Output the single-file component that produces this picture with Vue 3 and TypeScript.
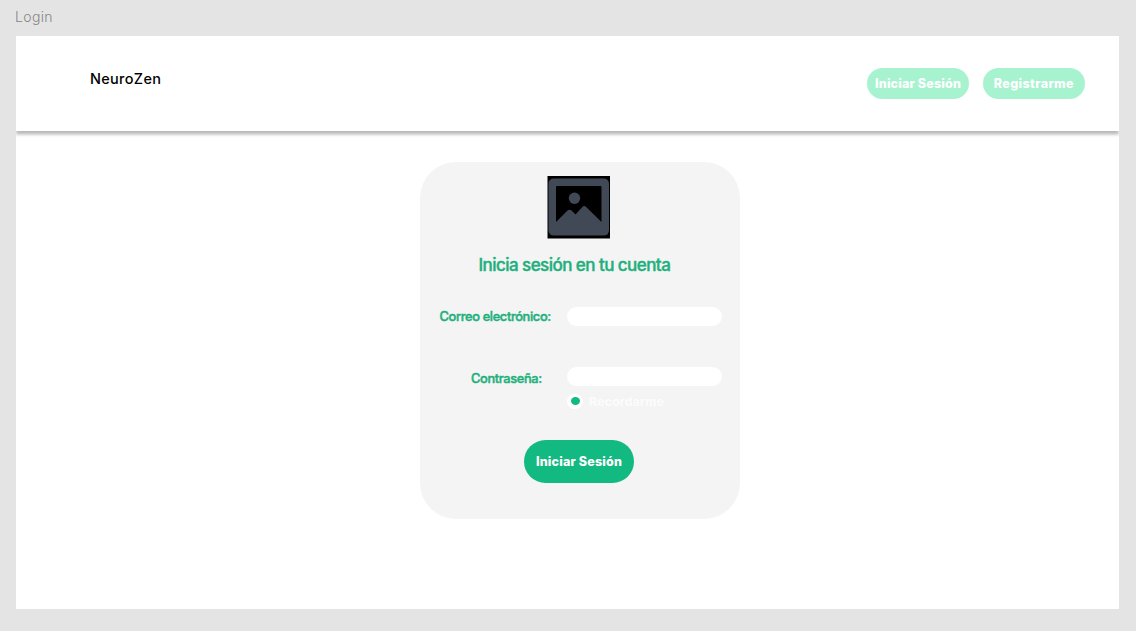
<script setup lang="ts">
import { ref } from 'vue'

const email = ref('')
const password = ref('')
const remember = ref(true)
</script>

<template>
  <div class="canvas">
    <div class="frame-name"><span>Login</span></div>
    <main class="frame">
      <header class="topbar">
        <span class="brand">NeuroZen</span>
        <nav class="actions">
          <button class="pill" type="button"><span class="t-login">Iniciar Sesión</span></button>
          <button class="pill" type="button"><span class="t-register">Registrarme</span></button>
        </nav>
      </header>
      <form class="card" @submit.prevent>
        <svg class="picture" viewBox="0 0 63 63" aria-hidden="true">
          <rect x="0.500" width="62.500" height="62.500" fill="#000" />
          <path
            fill="#414956"
            fill-rule="evenodd"
            d="M7 2.500H56.500Q62 2.500 62 8V54Q62 59.500 56.500 59.500H7Q1.500 59.500 1.500 54V8Q1.500 2.500 7 2.500ZM10 10Q9 10 9 11V46L20.500 34.600Q22.500 32.700 24.500 34.600L28.500 38.500L35.300 31Q37.200 29 39.200 31L54.500 46V11Q54.500 10 53.500 10Z"
          />
          <circle cx="27.500" cy="22.200" r="5.700" fill="#414956" />
        </svg>
        <h1 class="title"><span>Inicia sesión en tu cuenta</span></h1>
        <label class="row">
          <span class="label email">Correo electrónico:</span>
          <input v-model="email" class="field" type="text" />
        </label>
        <label class="row second">
          <span class="label pass">Contraseña:</span>
          <input v-model="password" class="field" type="password" />
        </label>
        <div class="remember" @click="remember = !remember">
          <span class="radio"><span v-if="remember" class="dot"></span></span>
          <span class="remember-text">Recordarme</span>
        </div>
        <button class="submit" type="submit"><span>Iniciar Sesión</span></button>
      </form>
    </main>
  </div>
</template>

<style>
body {
  margin: 0;
  background: #e4e4e4;
}
</style>

<style scoped>
.canvas {
  box-sizing: border-box;
  width: 1136px;
  height: 631px;
  padding: 0 17px 0 16px;
  overflow: hidden;
  background: #e4e4e4;
  font-family: Inter, 'Liberation Sans', sans-serif;
}
span {
  white-space: nowrap;
}
.frame-name {
  height: 35.5px;
  line-height: 34px;
  margin-left: -1px;
  font-size: 14px;
  font-weight: 300;
  letter-spacing: 0.35px;
  color: #868686;
}
.frame {
  height: 573.5px;
  background: #fff;
}
.topbar {
  box-sizing: border-box;
  display: flex;
  justify-content: space-between;
  height: 95.5px;
  padding: 32.9px 34px 0 74px;
  box-shadow: 0 3.5px 3px rgba(0, 0, 0, 0.27);
  clip-path: inset(0 0 -10px 0);
}
.brand {
  height: 22px;
  line-height: 22px;
  font-size: 14.5px;
  font-weight: 500;
  letter-spacing: 0.3px;
  color: #000;
}
.actions {
  display: flex;
  gap: 13.5px;
}
button {
  display: flex;
  align-items: center;
  justify-content: center;
  padding: 0;
  border: 0;
  font-family: inherit;
  font-weight: 800;
  color: #fff;
}
.pill {
  width: 102.3px;
  height: 30.5px;
  border-radius: 16px;
  background: #a7f3d0;
  font-size: 12.5px;
  letter-spacing: 0.18px;
}
.pill span {
  padding-bottom: 1px;
}
.t-register {
  letter-spacing: 0.4px;
}
.card {
  box-sizing: border-box;
  display: flex;
  flex-direction: column;
  width: 320px;
  height: 357px;
  margin: 31px 0 0 403.5px;
  padding-top: 13.5px;
  border-radius: 36px;
  background: #f4f4f4;
}
.picture {
  display: block;
  width: 63px;
  height: 63px;
  margin-left: 127.4px;
}
.title {
  height: 24px;
  margin: 14.5px 0 0 59px;
  line-height: 24px;
  font-size: 17px;
  font-weight: 500;
  letter-spacing: -0.55px;
  color: #1fb07c;
  -webkit-text-stroke: 0.4px #1fb07c;
}
.row {
  display: flex;
  align-items: center;
  height: 18.5px;
  margin-top: 30.4px;
}
.second {
  margin-top: 41.5px;
}
.label {
  box-sizing: border-box;
  flex: none;
  width: 147.5px;
  padding-left: 20px;
  font-size: 12.8px;
  font-weight: 500;
  letter-spacing: -0.35px;
  color: #1fb07c;
  -webkit-text-stroke: 0.45px #1fb07c;
}
.pass {
  padding: 3.5px 0 0 51.5px;
}
.field {
  box-sizing: border-box;
  width: 155px;
  height: 18.5px;
  padding: 0 9px;
  border: 0;
  outline: 0;
  border-radius: 10px;
  background: #fff;
  font: 11px Inter, sans-serif;
}
.remember {
  display: flex;
  align-items: center;
  height: 15px;
  margin: 7.7px 0 0 147.8px;
}
.radio {
  display: flex;
  align-items: center;
  justify-content: center;
  width: 15.5px;
  height: 15px;
  border-radius: 50%;
  background: #fff;
}
.dot {
  width: 9px;
  height: 8px;
  border-radius: 50%;
  background: #12b981;
}
.remember-text {
  margin-left: 6.3px;
  font-size: 12.2px;
  font-weight: 700;
  letter-spacing: 0.25px;
  color: #fcfcfc;
}
.submit {
  width: 110px;
  height: 43px;
  margin: 31px 0 0 104.5px;
  border-radius: 22px;
  background: #12b981;
  font-size: 12.5px;
  letter-spacing: 0.18px;
}
</style>
